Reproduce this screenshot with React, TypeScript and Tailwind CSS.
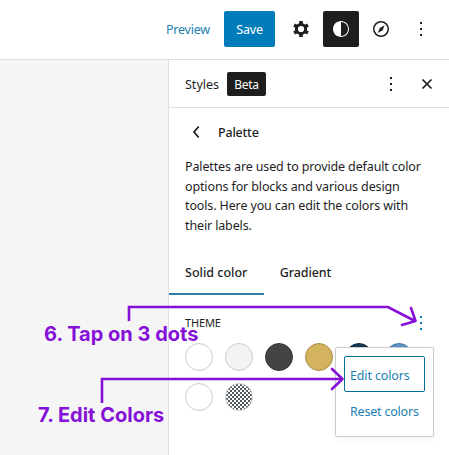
import React from "react";

function Dots({ className = "" }: { className?: string }) {
  return (
    <svg className={className} width="24" height="24" viewBox="0 0 24 24" fill="currentColor" shapeRendering="crispEdges">
      <path d="M11 5h2v2h-2zM11 11h2v2h-2zM11 17h2v2h-2z" />
    </svg>
  );
}

function Gear() {
  return (
    <svg width="24" height="24" viewBox="0 0 24 24" fill="none" stroke="currentColor">
      <circle cx="12" cy="12" r="4.6" strokeWidth="3" />
      <path d="M12 4v3M12 17v3M5.070 8l2.600 1.500M16.330 14.500l2.600 1.500M5.070 16l2.600-1.500M16.330 9.500l2.600-1.500" strokeWidth="3.600" />
    </svg>
  );
}

function Contrast() {
  return (
    <svg width="24" height="24" viewBox="0 0 24 24" fill="currentColor">
      <path d="M12 4c-4.4 0-8 3.6-8 8s3.6 8 8 8 8-3.6 8-8-3.6-8-8-8zm0 15V5c3.9 0 7 3.1 7 7s-3.1 7-7 7z" />
    </svg>
  );
}

function Compass() {
  return (
    <svg width="24" height="24" viewBox="0 0 24 24" fill="none">
      <circle cx="12" cy="12" r="7.25" stroke="currentColor" strokeWidth="1.5" />
      <path d="M15.6 8.2l-2 5-4.8 2.7 2-5z" fill="currentColor" />
    </svg>
  );
}

const swatches = [
  "bg-white border-[#ccc]",
  "bg-[#f3f3f3] border-[#ccc]",
  "bg-[#444] border-[#363636]",
  "bg-[#d3b35d] border-[#aa904a]",
  "bg-[#173955] border-[#132e44]",
  "bg-[#5b94cb] border-[#4977a3]",
  "bg-white border-[#ccc]",
];

export default function App() {
  return (
    <div className="relative flex h-[455px] w-[449px] flex-col overflow-hidden bg-white font-['Noto_Sans',sans-serif] text-[13px] text-[#1e1e1e]">
      <header className="flex h-[60px] shrink-0 items-center justify-end border-b border-[#e0e0e0] pb-px pr-4">
        <span className="mr-[14px] pt-[3px] text-[12.5px] tracking-[-0.2px] text-[#2280b2]">Preview</span>
        <button className="mb-px mr-2 flex h-9 w-[51px] items-center justify-center rounded-[2px] bg-[#007cba] pt-[3px] text-[12.5px] tracking-[-0.2px] text-white">Save</button>
        <span className="mb-px mr-1 flex size-9 items-center justify-center"><Gear /></span>
        <span className="mb-px mr-1 flex size-9 items-center justify-center rounded-[2px] bg-[#1e1e1e] text-white"><Contrast /></span>
        <span className="mb-px mr-[10px] flex size-9 items-center justify-center"><Compass /></span>
        <Dots />
      </header>
      <div className="flex min-h-0 flex-1">
        <main className="w-[168px] shrink-0 bg-[#f5f5f5]" />
        <aside className="flex flex-1 flex-col border-l border-[#e0e0e0]">
          <div className="flex h-12 items-center border-b border-[#e0e0e0] pl-4 pr-[10px]">
            <span className="pt-[3px] text-[12.5px]">Styles</span>
            <span className="ml-2 flex h-6 w-[39px] items-center justify-center rounded-[2px] bg-[#1e1e1e] pt-[2px] text-[12px] tracking-[-0.3px] text-white">Beta</span>
            <Dots className="ml-auto mr-3" />
            <svg width="24" height="24" viewBox="0 0 24 24" fill="none" stroke="currentColor" strokeWidth="1.7"><path d="M7.5 7.5l9 9M16.5 7.5l-9 9" /></svg>
          </div>
          <div className="flex h-12 items-center pl-[15px]">
            <svg width="24" height="24" viewBox="0 0 24 24" fill="none" stroke="currentColor" strokeWidth="1.8"><path d="M14.700 6.500L10 12l4.700 5.500" /></svg>
            <span className="ml-[10px] pt-[2px] text-[12.5px] font-medium tracking-[-0.2px]">Palette</span>
          </div>
          <p className="whitespace-nowrap pl-4 pt-[1px] text-[12.5px] leading-[19.6px] tracking-[-0.13px]">
            Palettes are used to provide default color<br />options for blocks and various design<br />tools. Here you can edit the colors with<br />their labels.
          </p>
          <div className="mt-3 flex h-12 text-[12.5px] font-medium">
            <span className="flex w-[95px] items-center border-b-2 border-[#2b7fa5] pl-4 pt-[5px]">Solid color</span>
            <span className="flex w-[83px] items-center justify-center pt-[3px] tracking-[-0.1px]">Gradient</span>
          </div>
          <div className="mt-4 flex h-6 items-center justify-between pl-4 pr-4">
            <span className="text-[11px] tracking-[-0.15px]">THEME</span>
            <Dots className="text-[#007cba]" />
          </div>
          <div className="mt-2 flex flex-wrap gap-3 pl-4">
            {swatches.map((c, i) => <span key={i} className={`size-7 rounded-full border ${c}`} />)}
            <span className="size-7 rounded-full border border-[#ccc] bg-[repeating-conic-gradient(#50575e_0_25%,#fff_0_50%)] bg-[length:4px_4px]" />
          </div>
        </aside>
      </div>

      <div className="absolute left-[335px] top-[347px] h-[90px] w-[99px] rounded-[2px] border border-[#ccc] bg-white p-2 text-[12.5px] tracking-[-0.15px] text-[#2280b2] shadow-[0_2px_6px_rgba(0,0,0,0.05)]">
        <div className="flex h-9 items-center whitespace-nowrap rounded-[2px] border border-[#007099] pl-[5px] pt-[4px]">Edit colors</div>
        <div className="flex h-9 items-center whitespace-nowrap pl-[6px] pt-[4px] tracking-[-0.2px]">Reset colors</div>
      </div>

      <svg className="absolute left-0 top-0" width="449" height="455" fill="none" stroke="#8510d8" strokeWidth="2.6">
        <path d="M129 321V307H388L415 321" />
        <path d="M411 308L415.500 321L402 325" strokeLinecap="round" strokeLinejoin="round" />
        <path d="M102 403V379H342" />
        <path d="M332 369L342.500 379L332 389" strokeLinecap="round" strokeLinejoin="round" />
      </svg>
      <div className="absolute left-[44px] top-[322px] whitespace-nowrap font-['Inter',sans-serif] text-[20px] font-bold leading-6 text-[#8510d8]">6. Tap on 3 dots</div>
      <div className="absolute left-[38px] top-[403px] whitespace-nowrap font-['Inter',sans-serif] text-[20px] font-bold leading-6 text-[#8510d8]">7. Edit Colors</div>
    </div>
  );
}
